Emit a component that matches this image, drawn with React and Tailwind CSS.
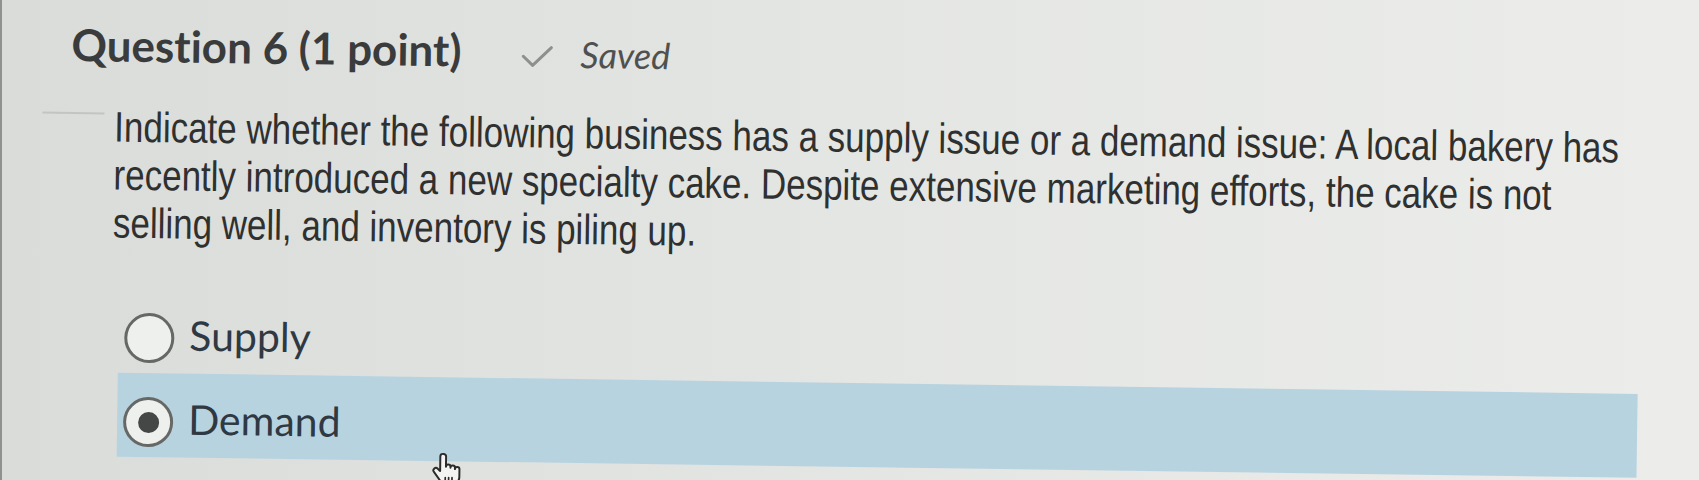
import React from "react";

function Check() {
  return (
    <svg width="32" height="22" viewBox="0 0 32 22" className="ml-[60px] mb-[3px] shrink-0" fill="none">
      <path d="M2 11 L11.5 20 L30 2" stroke="#8e908d" strokeWidth="3" strokeLinecap="round" strokeLinejoin="round" />
    </svg>
  );
}

function HandCursor() {
  return (
    <svg width="34" height="38" viewBox="0 0 24 27" className="absolute left-[434px] top-[446px]" fill="none">
      <path
        d="M9.3 1.2c-1 0-1.8.8-1.8 1.8v10.4l-1.7-1.6c-.7-.7-1.9-.7-2.6 0-.6.6-.7 1.6-.1 2.3l4.7 6.4c1 1.4 2.6 2.2 4.3 2.2h3.9c2.9 0 5.2-2.3 5.2-5.2v-5.6c0-.9-.7-1.6-1.6-1.6s-1.6.7-1.6 1.6v-1c0-.9-.7-1.6-1.6-1.6s-1.6.7-1.6 1.6v-.6c0-.9-.7-1.6-1.6-1.6s-1.6.7-1.6 1.6V3c0-1-.8-1.8-1.8-1.8z"
        fill="#f4f5f3"
        stroke="#2b2b2b"
        strokeWidth="1.4"
        strokeLinejoin="round"
      />
      <path d="M11.2 18v4.5M13.6 18v4.5M16 18v4.5" stroke="#2b2b2b" strokeWidth="1.2" strokeLinecap="round" />
    </svg>
  );
}

function Radio({ checked }) {
  return (
    <div className="mt-[24px] w-[50px] h-[50px] shrink-0 rounded-full border-[3px] border-[#666866] bg-[#eef0ee] flex items-center justify-center">
      {checked && <div className="w-[21px] h-[21px] rounded-full bg-[#454746]" />}
    </div>
  );
}

function Option({ label, checked }) {
  return (
    <div className={`h-[84px] flex items-start pl-[6px] ${checked ? "bg-[#b8d3e0]" : ""}`}>
      <Radio checked={checked} />
      <span className="ml-[15px] mt-[22px] font-[Lato,sans-serif] text-[41px] leading-[48px] text-[#2f3943]">
        {label}
      </span>
    </div>
  );
}

export default function App() {
  return (
    <div className="relative w-[1699px] h-[480px] overflow-hidden bg-linear-to-r from-[#dadcd9] via-[#e4e6e3] to-[#ecedea] border-l-2 border-[#8f918e]">
      <div className="relative origin-top-left rotate-[0.8deg] pt-[17px]">
        <div className="flex items-baseline pl-[70px]">
          <h2 className="font-[Lato,sans-serif] font-bold text-[44px] leading-[52px] text-[#3a3b3c] [font-variant-ligatures:none]">
            Question 6 (1 point)
          </h2>
          <Check />
          <span className="ml-[27px] font-[Lato,sans-serif] italic text-[36px] leading-[40px] text-[#4f5150]">
            Saved
          </span>
        </div>

        <div className="mt-[33px] flex items-start">
          <div className="ml-[42px] mt-[9px] w-[62px] h-[2px] bg-[#c3c5c2] shrink-0" />
          <p className="ml-[10px] w-[1860px] shrink-0 origin-left scale-x-[0.823] font-['Liberation_Sans',Arial,sans-serif] text-[42.5px] leading-[48px] text-[#2f3030]">
            Indicate whether the following business has a supply issue or a demand issue: A local bakery has
            recently introduced a new specialty cake. Despite extensive marketing efforts, the cake is not
            selling well, and inventory is piling up.
          </p>
        </div>

        <div className="mt-[41px] ml-[121px] w-[1520px] flex flex-col">
          <Option label="Supply" />
          <Option label="Demand" checked />
        </div>

        <HandCursor />
      </div>
    </div>
  );
}
